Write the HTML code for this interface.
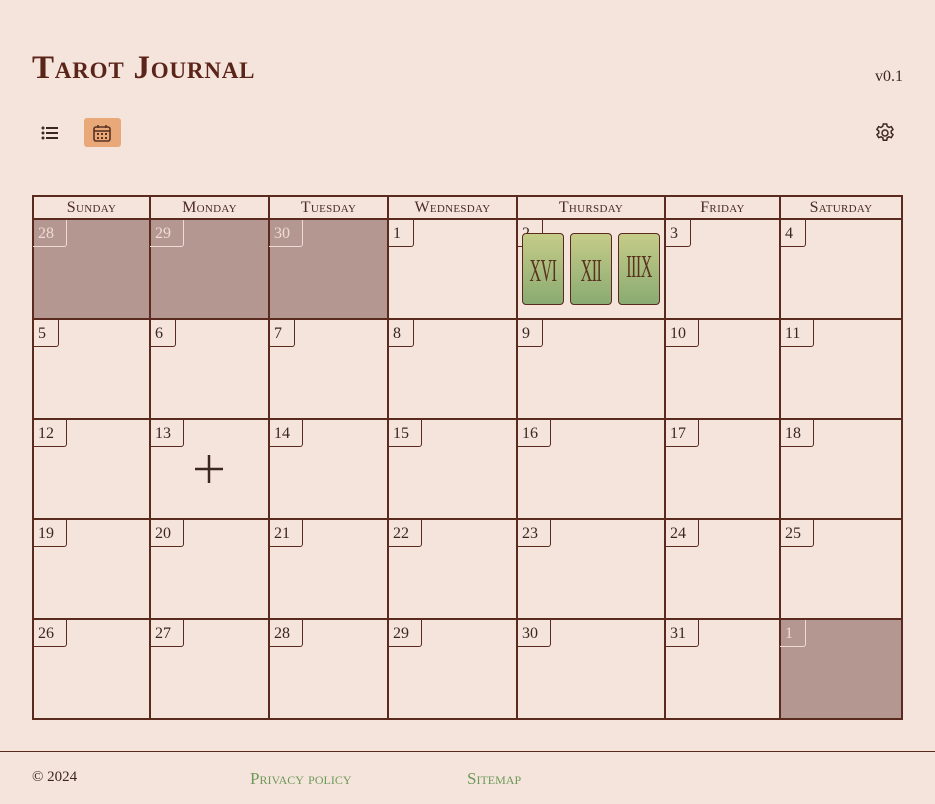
<!DOCTYPE html>
<html><head><meta charset="utf-8"><style>
body{margin:0;width:935px;height:804px;background:#f5e4dc;font-family:"Liberation Serif",serif;color:#3b2620;position:relative;overflow:hidden}
.a{position:absolute}
h1{position:absolute;left:32px;top:50px;margin:0;font-size:33px;font-variant:small-caps;font-weight:bold;color:#5a2418;letter-spacing:0.8px;line-height:36px}
.v{left:875px;top:68px;font-size:16px}
.hl{height:2px;background:#5a2a1e}
.vl{width:2px;background:#5a2a1e}
.hd{font-variant:small-caps;font-size:16px;text-align:center;top:197px;height:22px;line-height:22px;color:#4a2a22;letter-spacing:0.3px}
.g{background:#b39790}
.n{height:26px;border:1px solid #5a2a1e;border-top:none;border-left:none;font-size:16px;line-height:28px;box-sizing:content-box;border-radius:0 0 3px 0}
.gn{color:#f0dcd4;border-color:#efdcd5}
.c{width:40px;height:70px;border:1px solid #5a2a1e;border-radius:4px;top:233px;background:linear-gradient(#c5cc88,#8aab72);font-size:32px;color:#5a3320;text-align:center;line-height:72px}
.c span{display:block;width:100px;margin-left:-30px;text-align:center;transform:scaleX(0.5);letter-spacing:-1px}
.f{top:769px;font-size:15px}
.lk{color:#6d9a58;font-variant:small-caps;font-size:17px}
</style></head><body>
<h1>Tarot Journal</h1>
<div class="a v">v0.1</div>
<svg class="a" style="left:40px;top:124px" width="20" height="18" viewBox="0 0 20 18"><g fill="#3b2620"><circle cx="3" cy="4" r="1.5"/><circle cx="3" cy="9" r="1.5"/><circle cx="3" cy="14" r="1.5"/><rect x="6" y="3" width="12" height="2"/><rect x="6" y="8" width="12" height="2"/><rect x="6" y="13" width="12" height="2"/></g></svg>
<div class="a" style="left:84px;top:118px;width:37px;height:29px;background:#e8a878;border-radius:3px"></div>
<svg class="a" style="left:92px;top:123px" width="20" height="20" viewBox="0 0 20 20"><g fill="none" stroke="#5a3322" stroke-width="1.6"><rect x="2" y="4" width="16" height="14" rx="2"/><line x1="2" y1="8" x2="18" y2="8"/><line x1="6" y1="2" x2="6" y2="5"/><line x1="14" y1="2" x2="14" y2="5"/></g><g fill="#5a3322"><rect x="5" y="10" width="2" height="2"/><rect x="9" y="10" width="2" height="2"/><rect x="13" y="10" width="2" height="2"/><rect x="5" y="14" width="2" height="2"/><rect x="9" y="14" width="2" height="2"/><rect x="13" y="14" width="2" height="2"/></g></svg>
<svg class="a" style="left:873px;top:121px" width="24" height="24" viewBox="0 0 24 24"><g fill="none" stroke="#3b2620" stroke-width="1.5"><circle cx="12" cy="12" r="3"/><path d="M10.3 3h3.4l.5 2.4 1.8 1 2.3-.8 1.7 2.9-1.8 1.6v2l1.8 1.6-1.7 2.9-2.3-.8-1.8 1-.5 2.4h-3.4l-.5-2.4-1.8-1-2.3.8-1.7-2.9 1.8-1.6v-2L3.9 8.5l1.7-2.9 2.3.8 1.8-1z"/></g></svg>

<div class="a g" style="left:33px;top:219px;width:355px;height:100px"></div>
<div class="a g" style="left:780px;top:619px;width:122px;height:100px"></div>

<div class="a hd" style="left:33px;width:117px">Sunday</div>
<div class="a hd" style="left:150px;width:119px">Monday</div>
<div class="a hd" style="left:269px;width:119px">Tuesday</div>
<div class="a hd" style="left:388px;width:129px">Wednesday</div>
<div class="a hd" style="left:517px;width:148px">Thursday</div>
<div class="a hd" style="left:665px;width:115px">Friday</div>
<div class="a hd" style="left:780px;width:122px">Saturday</div>

<div class="a hl" style="left:32px;top:195px;width:871px"></div>
<div class="a hl" style="left:32px;top:218px;width:871px"></div>
<div class="a hl" style="left:32px;top:318px;width:871px"></div>
<div class="a hl" style="left:32px;top:418px;width:871px"></div>
<div class="a hl" style="left:32px;top:518px;width:871px"></div>
<div class="a hl" style="left:32px;top:618px;width:871px"></div>
<div class="a hl" style="left:32px;top:718px;width:871px"></div>
<div class="a vl" style="left:32px;top:195px;height:525px"></div>
<div class="a vl" style="left:149px;top:195px;height:525px"></div>
<div class="a vl" style="left:268px;top:195px;height:525px"></div>
<div class="a vl" style="left:387px;top:195px;height:525px"></div>
<div class="a vl" style="left:516px;top:195px;height:525px"></div>
<div class="a vl" style="left:664px;top:195px;height:525px"></div>
<div class="a vl" style="left:779px;top:195px;height:525px"></div>
<div class="a vl" style="left:901px;top:195px;height:525px"></div>

<div id="nums"></div>
<div class="a c" style="left:522px"><span>XVI</span></div>
<div class="a c" style="left:570px"><span>XII</span></div>
<div class="a c" style="left:618px;line-height:64px"><span>IIIX</span></div>

<svg class="a" style="left:193px;top:453px" width="32" height="32"><g stroke="#3b2620" stroke-width="2.5"><line x1="16" y1="2" x2="16" y2="30"/><line x1="2" y1="16" x2="30" y2="16"/></g></svg>

<div class="a hl" style="left:0;top:751px;width:935px;height:1px"></div>
<div class="a f" style="left:32px">© 2024</div>
<div class="a f lk" style="left:250px">Privacy policy</div>
<div class="a f lk" style="left:467px">Sitemap</div>

<script>
var xs=[34,151,270,389,518,666,781];
var rows=[[28,29,30,1,2,3,4],[5,6,7,8,9,10,11],[12,13,14,15,16,17,18],[19,20,21,22,23,24,25],[26,27,28,29,30,31,1]];
var h='';
rows.forEach(function(r,i){r.forEach(function(d,j){
var g=(i==0&&j<3)||(i==4&&j==6);
var w=d>9?28:20;
h+='<div class="a n'+(g?' gn':'')+'" style="left:'+(xs[j]-1)+'px;top:'+(220+i*100)+'px;width:'+w+'px;padding-left:5px">'+d+'</div>';});});
document.getElementById('nums').innerHTML=h;
</script>
</body></html>
